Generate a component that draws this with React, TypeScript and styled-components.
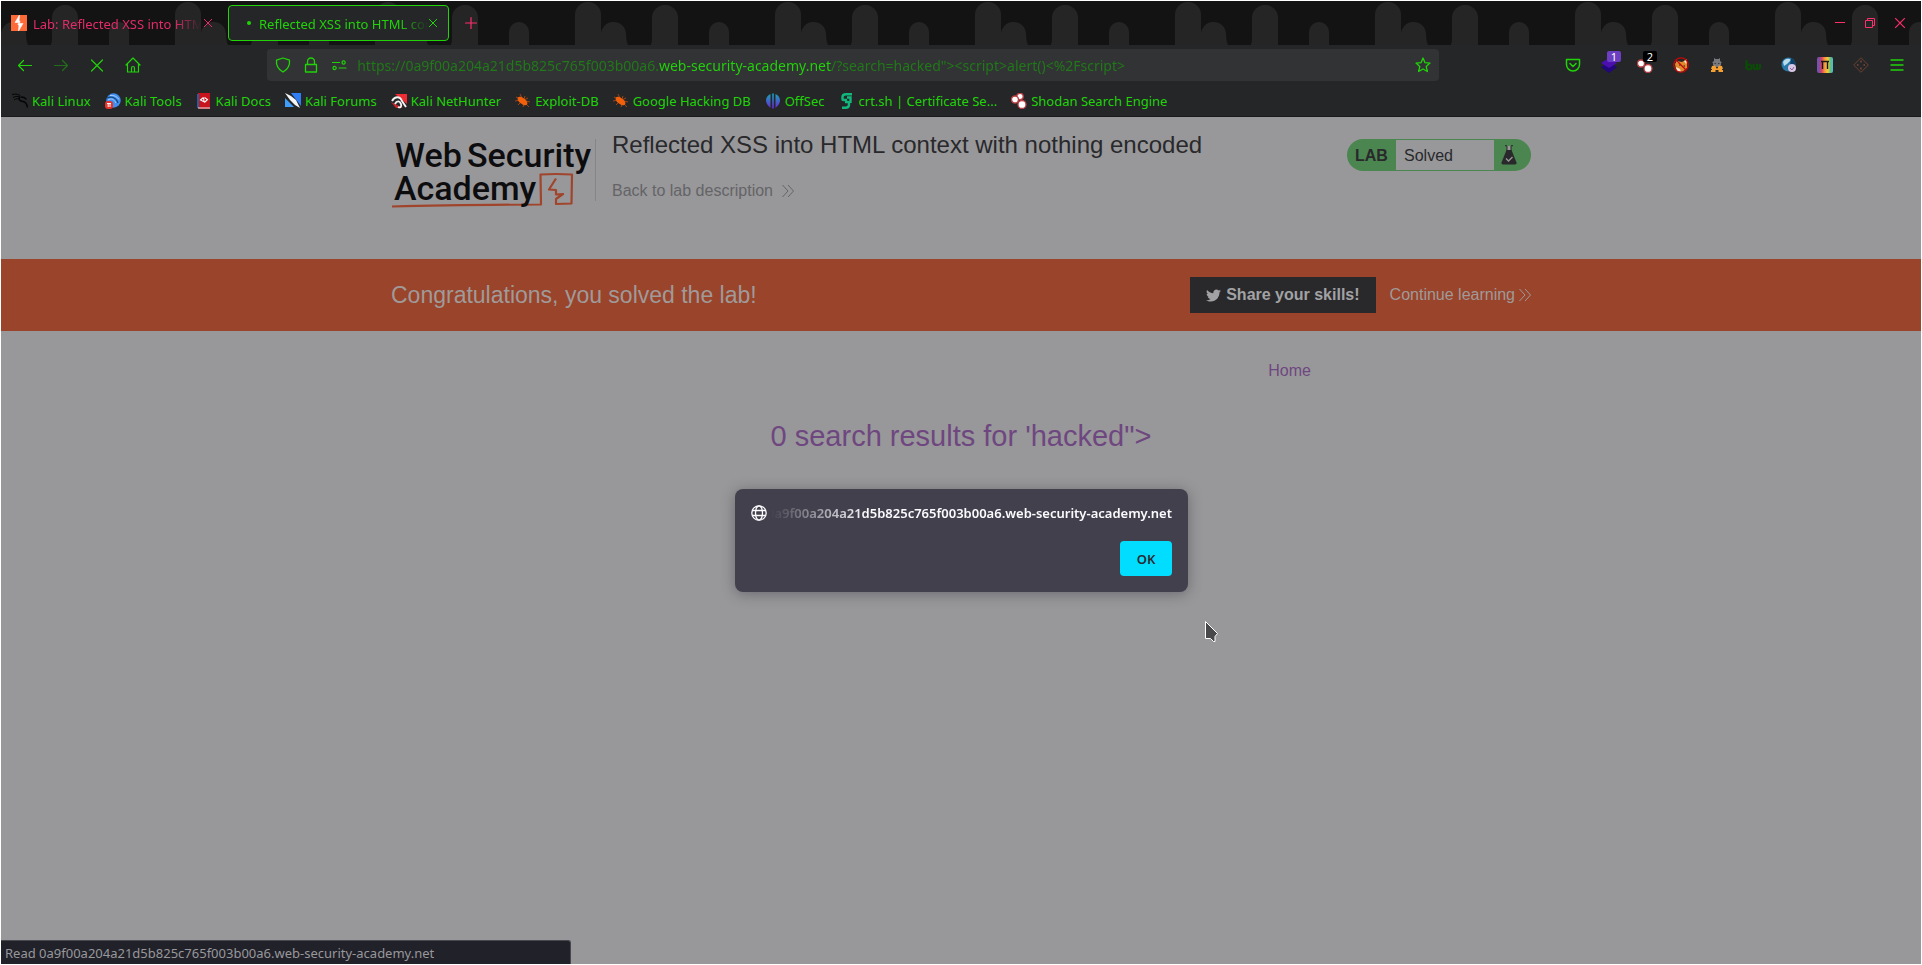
import React from "react";
import styled, { createGlobalStyle, css } from "styled-components";
import { FaTwitter } from "react-icons/fa";

const GREEN = "#20d408";
const GREEN_DIM = "#1f7a17";
const PINK = "#ff2e6c";
const UI_FONT = `"Noto Sans", "Open Sans", sans-serif`;
const PAGE_FONT = `"Liberation Sans", Arial, sans-serif`;

const Global = createGlobalStyle`
  * { box-sizing: border-box; }
  html, body { margin: 0; padding: 0; background: #ffffff; }
  button { font: inherit; color: inherit; background: none; border: 0; padding: 0; }
  a { color: inherit; text-decoration: none; }
  svg { display: block; flex: none; }
`;

/* ---------- window ---------- */

const Window = styled.div`
  position: relative;
  display: flex;
  flex-direction: column;
  min-height: 100vh;
  padding: 1px;
  font-family: ${UI_FONT};
  font-size: 13px;
`;

const TabStrip = styled.div`
  position: relative;
  display: flex;
  align-items: center;
  height: 44px;
  background: #131313;
`;

const StripArt = styled.svg`
  position: absolute;
  inset: 0;
  width: 100%;
  height: 100%;
`;

const Tab = styled.div<{ $active?: boolean }>`
  position: relative;
  display: flex;
  align-items: center;
  width: 221px;
  height: 36px;
  margin-right: 6px;
  padding: 0 9px 0 10px;
  gap: 6px;
  border-radius: 4px;
  color: ${(p) => (p.$active ? GREEN : "#e42b68")};
  ${(p) =>
    p.$active &&
    css`
      background: #252628;
      border: 1px solid ${GREEN};
      padding: 0 10px 0 15px;
      gap: 5px;
    `}
`;

const TabLabel = styled.span`
  flex: 1;
  min-width: 0;
  padding-top: 2px;
  overflow: hidden;
  white-space: nowrap;
  line-height: 20px;
  mask-image: linear-gradient(to left, transparent, #000 28px);
`;

const Spinner = styled.span`
  display: flex;
  justify-content: center;
  align-items: center;
  width: 10px;
  height: 16px;
  &::before {
    content: "";
    width: 4px;
    height: 4px;
    border-radius: 50%;
    background: ${GREEN};
  }
`;

const CloseTab = styled.button`
  display: flex;
  margin-left: -5px;
`;

const NewTab = styled.button`
  position: relative;
  display: flex;
  margin-left: 8px;
  color: ${PINK};
`;

const WindowControls = styled.div`
  position: relative;
  display: flex;
  margin-left: auto;
  padding-right: 6px;
  color: ${PINK};
`;

const ControlButton = styled.button`
  display: flex;
  justify-content: center;
  align-items: center;
  width: 30px;
  height: 30px;
`;

const Toolbar = styled.div`
  display: flex;
  align-items: center;
  height: 40px;
  padding: 0 6px;
  background: #252628;
  color: ${GREEN};
`;

const Group = styled.div`
  display: flex;
`;

const Spring = styled.div`
  flex: 1 1 0;
`;

const ToolButton = styled.button<{ $dim?: boolean }>`
  position: relative;
  display: flex;
  justify-content: center;
  align-items: center;
  width: 36px;
  height: 32px;
  opacity: ${(p) => (p.$dim ? 0.4 : 1)};
`;

const Badge = styled.span<{ $bg: string }>`
  position: absolute;
  top: 2px;
  right: 6px;
  width: 14px;
  height: 11px;
  border-radius: 2px;
  background: ${(p) => p.$bg};
  color: #ffffff;
  font-size: 11px;
  line-height: 11px;
  text-align: center;
`;

const UrlBar = styled.div`
  display: flex;
  flex: 10 1 0;
  align-items: center;
  min-width: 0;
  height: 32px;
  padding: 0 8px 0 2px;
  border-radius: 4px;
  background: #323335;
`;

const UrlButton = styled.button`
  display: flex;
  justify-content: center;
  width: 28px;
  &:last-child { width: 16px; }
`;

const UrlInput = styled.input`
  flex: 1;
  min-width: 0;
  height: 32px;
  padding: 0;
  margin-left: 4px;
  border: 0;
  outline: 0;
  font-family: ${UI_FONT};
  font-size: 14px;
  color: ${GREEN_DIM};
  -webkit-text-fill-color: transparent;
  background: linear-gradient(to right, ${GREEN_DIM} 302px, ${GREEN} 302px, ${GREEN} 474px, ${GREEN_DIM} 474px);
  background-clip: text;
  -webkit-background-clip: text;
`;

const Bookmarks = styled.nav`
  display: flex;
  align-items: center;
  gap: 14px;
  height: 32px;
  padding: 0 11px;
  background: #252628;
  border-bottom: 1px solid #1b1b1c;
  color: ${GREEN};
`;

const Bookmark = styled.a`
  display: flex;
  align-items: center;
  gap: 4px;
  line-height: 20px;
  white-space: nowrap;
`;

/* ---------- page ---------- */

const Page = styled.main`
  flex: 1;
  background: #98989a;
  font-family: ${PAGE_FONT};
  font-size: 16px;
  line-height: 20px;
  color: #29292c;
`;

const Container = styled.div`
  display: flex;
  width: 100%;
  max-width: 1140px;
  margin: 0 auto;
`;

const LabHeader = styled.header`
  height: 142px;
  padding-top: 12px;
`;

const LogoLink = styled.a`
  margin-top: 7px;
`;

const TitleBlock = styled.div`
  margin: 10px 0 0 4px;
  padding-left: 16px;
  height: 62px;
  border-left: 1px solid #858587;
`;

const LabTitle = styled.h2`
  margin: -10px 0 20px;
  font-size: 24px;
  font-weight: 400;
  line-height: 32px;
`;

const BackLink = styled.a`
  display: flex;
  align-items: center;
  gap: 9px;
  color: #646467;
`;

const Status = styled.div`
  display: flex;
  align-items: center;
  width: 184px;
  height: 32px;
  margin: 10px 0 0 auto;
  padding: 1px 0;
  border-radius: 16px;
  background: #4b8650;
`;

const StatusTag = styled.span`
  width: 49px;
  padding: 2px 0 0 8px;
  font-weight: 700;
`;

const StatusText = styled.p`
  width: 98px;
  height: 30px;
  margin: 0;
  padding-left: 8px;
  background: #98989a;
  line-height: 32px;
`;

const Flask = styled.svg`
  margin-left: 6px;
`;

const Banner = styled.section`
  padding: 18px 0;
  background: #99442b;
  color: #a09a99;
  ${Container} { align-items: center; }
`;

const BannerTitle = styled.h4`
  margin: 0 auto 0 0;
  font-size: 23px;
  font-weight: 400;
  line-height: 36px;
`;

const ShareButton = styled.button`
  display: flex;
  align-items: center;
  gap: 5px;
  height: 36px;
  padding: 0 16px;
  background: #29292c;
  color: #a2a2a4;
  font-weight: 700;
`;

const ContinueLink = styled.a`
  display: flex;
  align-items: center;
  gap: 4px;
  margin-left: 14px;
`;

const Results = styled.div`
  max-width: 700px;
  margin: 0 auto;
  padding-top: 30px;
  color: #6f4780;
`;

const HomeNav = styled.nav`
  display: flex;
  justify-content: flex-end;
`;

const ResultsTitle = styled.h1`
  margin: 37px 0 0;
  font-size: 29px;
  font-weight: 400;
  line-height: 36px;
  text-align: center;
`;

/* ---------- overlays ---------- */

const Alert = styled.div`
  position: absolute;
  top: 489px;
  left: 50%;
  width: 453px;
  transform: translateX(-226px);
  padding: 16px;
  border-radius: 8px;
  background: #42404d;
  color: #fbfbfe;
  box-shadow: 0 2px 14px rgba(40, 40, 50, 0.4);
`;

const AlertOrigin = styled.div`
  display: flex;
  align-items: center;
  gap: 4px;
  height: 16px;
`;

const OriginText = styled.span`
  display: flex;
  flex: 1;
  justify-content: flex-end;
  min-width: 0;
  overflow: hidden;
  font-weight: 600;
  line-height: 18px;
  white-space: nowrap;
  mask-image: linear-gradient(to right, transparent, #000 96px);
`;

const AlertActions = styled.div`
  display: flex;
  justify-content: flex-end;
  margin-top: 20px;
`;

const OkButton = styled.button`
  width: 52px;
  height: 35px;
  border-radius: 4px;
  background: #00ddff;
  color: #2b2a33;
  font-weight: 600;
`;

const Pointer = styled.svg`
  position: absolute;
  top: 620px;
  left: calc(50% + 243px);
`;

const LoadStatus = styled.div`
  position: absolute;
  left: 1px;
  bottom: 1px;
  min-width: 570px;
  height: 24px;
  padding-left: 4px;
  border-top: 1px solid #48484e;
  border-right: 1px solid #48484e;
  border-top-right-radius: 3px;
  background: #21212a;
  color: #98989a;
  line-height: 25px;
`;

/* ---------- icons ---------- */

const Line = ({ d, size = 16, width = 1.3 }: { d: string; size?: number; width?: number }) => (
  <svg width={size} height={size} viewBox="0 0 16 16" fill="none" stroke="currentColor" strokeWidth={width} strokeLinecap="round" strokeLinejoin="round" aria-hidden="true">
    <path d={d} />
  </svg>
);

const Chevrons = () => (
  <svg width="12" height="14" viewBox="0 0 12 14" fill="none" stroke="currentColor" strokeWidth="1" aria-hidden="true">
    <path d="M.5 1 6 7 .5 13M6 1l5.500 6L6 13" />
  </svg>
);

const Bug = () => (
  <svg width="16" height="16" viewBox="0 0 16 16" aria-hidden="true">
    <path d="M1 4l4 2M0 8l5-1M3 12l3-3M5 1l2 4M10 3l-1 3M15 9l-4-1M14 14l-3-3M8 14l1-3M13 5l-4 2" stroke="#9b4516" strokeWidth="1" />
    <ellipse cx="7.500" cy="8" rx="5.800" ry="3" transform="rotate(38 7.500 8)" fill="#f2600c" />
  </svg>
);

const Dots = ({ three }: { three?: boolean }) => (
  <svg width="16" height="16" viewBox="0 0 16 16" aria-hidden="true">
    <g fill="#ffffff" stroke="#b84044" strokeWidth="1.300">
      {three && <ellipse cx="9" cy="3.500" rx="3.200" ry="3.200" />}
      <circle cx="4" cy="6.500" r="3.500" />
      <circle cx="11" cy="11.500" r="4" />
    </g>
  </svg>
);

const icons: Record<string, React.ReactNode> = {
  linux: (
    <svg width="16" height="16" viewBox="0 0 16 16" fill="none" stroke="#050505" aria-hidden="true">
      <path d="M0 1.500c4-1 7 0 8.500 1.500M1 4.500c3-1.500 5-1.500 7 0M2 7c2-1.500 4-1.500 5-1" strokeWidth="1" />
      <path d="M8 3.500c-2 3 0 4.500 3 5 3 .5 4 3 4.500 6M9 4l3 .5 2.500 2" strokeWidth="1.500" />
    </svg>
  ),
  tools: (
    <svg width="16" height="16" viewBox="0 0 16 16" aria-hidden="true">
      <circle cx="8.500" cy="7.500" r="7.200" fill="#3f8ef0" />
      <path d="M2 5c4-2 9-1 11 5" stroke="#174878" strokeWidth="1.300" fill="none" />
      <path d="M3 7c3-2 6-1 8 3M5 2.500c4-.5 7 1 9 4" stroke="#a9d0ff" strokeWidth="1" fill="none" />
      <rect x="0" y="8" width="8" height="8" rx="3" fill="#e5332c" />
      <path d="M2 10.500h4M3.200 10.500V14M5 10.500V14" stroke="#fff" />
    </svg>
  ),
  docs: (
    <svg width="16" height="16" viewBox="0 0 16 16" aria-hidden="true">
      <path d="M2 0h12v16H3z" fill="#c8141c" />
      <path d="M1 1h2v14H1z" fill="#2b5c9e" />
      <path d="M2 15h12" stroke="#e8e8e8" />
      <path d="M7.500 4.500 4.500 7l3 1.500M7 5.500c1.500-2 0 4.500 2 3.500l2.500-2.500-3-2" stroke="#fff" strokeWidth="1.100" fill="none" />
    </svg>
  ),
  forums: (
    <svg width="16" height="16" viewBox="0 0 16 16" aria-hidden="true">
      <path d="M6 0h10v13z" fill="#2f7ef6" />
      <path d="M0 5l9 9H0z" fill="#3f9cf8" />
      <path d="M0 0l6 3 5 4 4 8-5-3-5-5z" fill="#f4f6f8" />
    </svg>
  ),
  hunter: (
    <svg width="16" height="16" viewBox="0 0 16 16" aria-hidden="true">
      <path d="M4 1h12v10z" fill="#ef2b33" />
      <path d="M0 9l5 6h7z" fill="#c9242c" />
      <path d="M1 8c3-5 8-5 10 0l4 6M4 11c2-4 5-3 6 0s-1 4-3 3" stroke="#f2f2f2" strokeWidth="1.900" fill="none" />
    </svg>
  ),
  bug: <Bug />,
  offsec: (
    <svg width="16" height="16" viewBox="0 0 16 16" aria-hidden="true">
      <defs>
        <linearGradient id="offsec" x1="0" y1="0" x2="0" y2="1">
          <stop offset="0" stopColor="#16a6b8" />
          <stop offset="1" stopColor="#6a27d8" />
        </linearGradient>
      </defs>
      <path d="M5.500 1C-.5 4-.5 10 5.500 15zM7.200.5h1.600v15H7.200zM10.500 1c6 3 6 9 0 14z" fill="url(#offsec)" />
    </svg>
  ),
  crt: (
    <svg width="16" height="16" viewBox="0 0 16 16" fill="none" stroke="#10b87c" strokeWidth="2.400" aria-hidden="true">
      <path d="M13 1.200H7Q3.500 1.200 3.500 4v2q0 1 1.500 1h3M3 14.800h3.500q3.500 0 3.500-3V10q0-1-1.500-1H6M8 4.500h3.500V10" />
    </svg>
  ),
  shodan: <Dots three />,
};

const bookmarks: [string, string][] = [
  ["linux", "Kali Linux"],
  ["tools", "Kali Tools"],
  ["docs", "Kali Docs"],
  ["forums", "Kali Forums"],
  ["hunter", "Kali NetHunter"],
  ["bug", "Exploit-DB"],
  ["bug", "Google Hacking DB"],
  ["offsec", "OffSec"],
  ["crt", "crt.sh | Certificate Se..."],
  ["shodan", "Shodan Search Engine"],
];

const extensions: { name: string; icon: React.ReactNode; badge?: string; badgeBg?: string }[] = [
  { name: "Pocket", icon: <Line d="M1.500 2.500h13v5a6.500 6.500 0 0 1-13 0zM5 6.500l3 3 3-3" width={1.5} /> },
  {
    name: "Layers",
    badge: "1",
    badgeBg: "#6c3fc0",
    icon: (
      <svg width="16" height="16" viewBox="0 0 16 16">
        <path d="M0 10l8-4 8 4-8 6z" fill="#21067c" />
        <path d="M0 6l8-5 8 5-8 5z" fill="#4a0fae" />
      </svg>
    ),
  },
  { name: "Shodan", icon: <Dots />, badge: "2", badgeBg: "#000000" },
  {
    name: "Fox",
    icon: (
      <svg width="16" height="16" viewBox="0 0 16 16">
        <path d="M2 7l2-3 5 1 5-3v9l-5 4-6-3z" fill="#e08a2c" />
        <path d="M3 10l4 2 1 3-4-1zM11 4l3-1-1 4zM3 5l2-1 1 2z" fill="#f5e8d8" />
        <path d="M6 8h1.500M10.500 9H12" stroke="#222" />
        <circle cx="8" cy="8" r="7.200" fill="none" stroke="#c40808" strokeWidth="1.300" />
        <path d="M3 3l10 10" stroke="#c40808" strokeWidth="1.200" />
      </svg>
    ),
  },
  {
    name: "Agent",
    icon: (
      <svg width="16" height="16" viewBox="0 0 16 16">
        <path d="M5 1l1.500 1h3L11 1v3l1.500 1v1H12v2l-2 2H6L4 8V6h-.5V5L5 4z" fill="#77797c" />
        <path d="M5.500 6.500h1.500M9 6.500h1.500" stroke="#3a3b3d" />
        <path d="M3 9l3-.5L8 12l2-3.500 3 .5 1 3h-1v1h1v2H9.500v-2h-3v2H2v-2h1v-1H2z" fill="#f5a030" />
      </svg>
    ),
  },
  {
    name: "Builder",
    icon: (
      <svg width="16" height="16" viewBox="0 0 16 16" fill="none" stroke="#0c4a08" strokeWidth="2.200">
        <path d="M1.500 3v9" />
        <circle cx="4" cy="10" r="2.500" />
        <path d="M8.500 7v3q0 2 1.700 2T12 10V7v3q0 2 1.500 2t1.500-2V7" />
      </svg>
    ),
  },
  {
    name: "Globe",
    icon: (
      <svg width="16" height="16" viewBox="0 0 16 16">
        <circle cx="7.500" cy="7.500" r="7" fill="#2878a8" />
        <path d="M2 5c2-4 6-4 8-2L6 7 3 9z" fill="#b8dcec" />
        <path d="M10 1c4 2 5 5 4 9L9 8z" fill="#0f3f66" />
        <circle cx="11" cy="11" r="4" fill="#d9c8e4" />
        <path d="M9 11l2 2 2-3" stroke="#8d5ea8" fill="none" />
      </svg>
    ),
  },
  {
    name: "Rainbow",
    icon: (
      <svg width="16" height="16" viewBox="0 0 16 16">
        <defs>
          <linearGradient id="rainbow">
            <stop offset="0.150" stopColor="#7d4fa8" />
            <stop offset="0.300" stopColor="#e2405c" />
            <stop offset="0.500" stopColor="#f2a03c" />
            <stop offset="0.680" stopColor="#f4cb38" />
            <stop offset="0.850" stopColor="#58c088" />
            <stop offset="1" stopColor="#58b8d8" />
          </linearGradient>
        </defs>
        <rect width="16" height="16" rx="2" fill="url(#rainbow)" />
        <path d="M4 4.500h8M5.500 4v8M10.500 4v8" stroke="#181818" strokeWidth="1.400" />
      </svg>
    ),
  },
  {
    name: "Dice",
    icon: (
      <svg width="16" height="16" viewBox="0 0 16 16" fill="none" stroke="#6b4030">
        <path d="M8 .7 15.300 8 8 15.300.7 8z" />
        <path d="M8 3.500v2M8 10.500v2M4 8h1.500M10.500 8H12" strokeWidth="1.800" />
      </svg>
    ),
  },
  { name: "Menu", icon: <Line d="M2 3h12M2 8h12M2 13h12" width={1.4} /> },
];

const Favicon = () => (
  <svg width="16" height="16" viewBox="0 0 16 16" aria-hidden="true">
    <rect width="16" height="16" fill="#ff6a39" />
    <path d="M8.500 0 4 7.500h3.500L7 10h1l-.5 6L12 8.500H8.500L9 6H8z" fill="#ffffff" stroke="#ffffff" strokeWidth=".6" />
  </svg>
);

const CloseMark = ({ size = 10 }: { size?: number }) => (
  <svg width={size} height={size} viewBox="0 0 10 10" fill="none" stroke="currentColor" strokeWidth="1" aria-hidden="true">
    <path d="M1 1l8 8M9 1 1 9" />
  </svg>
);

const Logo = () => (
  <svg width="200" height="74" viewBox="0 0 200 74" aria-label="Web Security Academy">
    <path d="M1 70.500Q60 69 150 68.500L149.500 38.500Q165 37.500 181 38.500L180.500 67.500 165 68V63L172 58 165 58.500V54L158 53.500 165 42.500" fill="none" stroke="#a0452b" strokeWidth="2.200" strokeLinejoin="round" />
    <g fontFamily="Roboto, sans-serif" fontSize="34" fontWeight="500" fill="#0d0d0f">
      <text x="4" y="31">Web</text>
      <text x="76" y="31">Security</text>
      <text x="3" y="64">Academy</text>
    </g>
  </svg>
);

export default function App() {
  return (
    <Window>
      <Global />
      <TabStrip>
        <StripArt aria-hidden="true">
          <defs>
            <pattern id="drips" width="200" height="44" patternUnits="userSpaceOnUse">
              <g fill="#252525">
                <path d="M0 44V34a12.500 12.500 0 0 1 25-1q0 7 2 11z" />
                <path d="M50 44q1-3 1-6V17a13 13 0 0 1 26 0v27z" />
                <path d="M108 44V31a10 10 0 0 1 20 0v13z" />
                <path d="M174 44V14a13 13 0 0 1 26 0v30z" />
              </g>
            </pattern>
          </defs>
          <rect width="100%" height="44" fill="url(#drips)" />
        </StripArt>
        <Tab>
          <Favicon />
          <TabLabel>Lab: Reflected XSS into HTML</TabLabel>
          <CloseTab aria-label="Close tab"><CloseMark /></CloseTab>
        </Tab>
        <Tab $active>
          <Spinner />
          <TabLabel>Reflected XSS into HTML context</TabLabel>
          <CloseTab aria-label="Close tab"><CloseMark /></CloseTab>
        </Tab>
        <NewTab aria-label="New tab"><Line d="M8 2.500v11M2.500 8h11" width={1.2} /></NewTab>
        <WindowControls>
          <ControlButton aria-label="Minimize">
            <svg width="10" height="10" viewBox="0 0 10 10" stroke="currentColor"><path d="M0 4.500h10" /></svg>
          </ControlButton>
          <ControlButton aria-label="Restore">
            <svg width="10" height="10" viewBox="0 0 10 10" fill="none" stroke="currentColor"><path d="M.5 2.500h7v7h-7zM2.500 2.500v-2h7v7h-2" /></svg>
          </ControlButton>
          <ControlButton aria-label="Close"><CloseMark size={12} /></ControlButton>
        </WindowControls>
      </TabStrip>

      <Toolbar>
        <Group>
          <ToolButton aria-label="Back"><Line d="M14.500 8.500H1.500M6.500 3.500l-5 5 5 5" width={1.2} /></ToolButton>
          <ToolButton aria-label="Forward" $dim><Line d="M1.500 8.500h13M9.500 3.500l5 5-5 5" width={1.2} /></ToolButton>
          <ToolButton aria-label="Stop"><Line d="M2.500 3l11 11M13.500 3l-11 11" width={1.2} /></ToolButton>
          <ToolButton aria-label="Home"><Line d="M1 8l7-7 7 7M2.500 7v8h11V7M6.500 15v-4a1.500 1.500 0 0 1 3 0v4" width={1.2} /></ToolButton>
        </Group>
        <Spring />
        <UrlBar>
          <UrlButton aria-label="Tracking protection"><Line d="M8 1l6.500 2.200c.5 5-1.500 9-6.500 11.800-5-2.800-7-6.800-6.500-11.800z" width={1.3} /></UrlButton>
          <UrlButton aria-label="Connection security"><Line d="M2.500 7.500h11v7.500h-11zM4.500 7.500V4.500a3.500 3.500 0 0 1 7 0v3" width={1.3} /></UrlButton>
          <UrlButton aria-label="Permissions"><Line d="M1.500 5.500h7M8 11h7M11 5.500a1.600 1.600 0 1 0 3.200 0 1.600 1.600 0 0 0-3.200 0M2 11a1.600 1.600 0 1 0 3.200 0A1.600 1.600 0 0 0 2 11" width={1.2} /></UrlButton>
          <UrlInput
            aria-label="Address"
            spellCheck={false}
            defaultValue={'https://0a9f00a204a21d5b825c765f003b00a6.web-security-academy.net/?search=hacked"><script>alert()<%2Fscript>'}
          />
          <UrlButton aria-label="Bookmark this page"><Line d="M8 1l2 4.700 5 .4-3.800 3.400 1.200 5L8 12l-4.400 2.500 1.200-5L1 6.100l5-.4z" width={1.3} /></UrlButton>
        </UrlBar>
        <Spring />
        <Group>
          {extensions.map((e) => (
            <ToolButton key={e.name} aria-label={e.name}>
              {e.icon}
              {e.badge && <Badge $bg={e.badgeBg!}>{e.badge}</Badge>}
            </ToolButton>
          ))}
        </Group>
      </Toolbar>

      <Bookmarks aria-label="Bookmarks">
        {bookmarks.map(([icon, label]) => (
          <Bookmark href="#" key={label}>
            {icons[icon]}
            {label}
          </Bookmark>
        ))}
      </Bookmarks>

      <Page>
        <LabHeader>
          <Container>
            <LogoLink href="#"><Logo /></LogoLink>
            <TitleBlock>
              <LabTitle>Reflected XSS into HTML context with nothing encoded</LabTitle>
              <BackLink href="#">Back to lab description <Chevrons /></BackLink>
            </TitleBlock>
            <Status>
              <StatusTag>LAB</StatusTag>
              <StatusText>Solved</StatusText>
              <Flask width="18" height="20" viewBox="0 0 18 20" aria-hidden="true">
                <path d="M7 1v6h4V1" fill="#98989a" />
                <path d="M5 .7h2M11 .7h2M7 1v5M11 1v5" stroke="#29292c" />
                <path d="M6.500 5h5l5 12.500q.5 2-1.500 2H3q-2 0-1.500-2z" fill="#29292c" />
                <path d="M6 13.500l2.500 2.500 4-4" stroke="#98989a" strokeWidth="1.300" fill="none" />
              </Flask>
            </Status>
          </Container>
        </LabHeader>

        <Banner>
          <Container>
            <BannerTitle>Congratulations, you solved the lab!</BannerTitle>
            <ShareButton><FaTwitter size={15} />Share your skills!</ShareButton>
            <ContinueLink href="#">Continue learning <Chevrons /></ContinueLink>
          </Container>
        </Banner>

        <Results>
          <HomeNav><a href="#">Home</a></HomeNav>
          <ResultsTitle>0 search results for 'hacked"&gt;</ResultsTitle>
        </Results>
      </Page>

      <Alert role="alertdialog" aria-label="Page message">
        <AlertOrigin>
          <svg width="16" height="16" viewBox="0 0 16 16" fill="none" stroke="currentColor" strokeWidth="1.300" aria-hidden="true">
            <circle cx="8" cy="8" r="7.200" />
            <ellipse cx="8" cy="8" rx="3.500" ry="7.200" />
            <path d="M1.500 5.500h13M1.500 10.500h13" />
          </svg>
          <OriginText>0a9f00a204a21d5b825c765f003b00a6.web-security-academy.net</OriginText>
        </AlertOrigin>
        <AlertActions>
          <OkButton>OK</OkButton>
        </AlertActions>
      </Alert>

      <Pointer width="16" height="24" viewBox="0 0 16 24" aria-hidden="true">
        <path d="M1.500 1.500v17h5l3 3h1.500v-5l2.500-3z" fill="#48484a" stroke="#ffffff" strokeWidth="1" />
      </Pointer>

      <LoadStatus>Read 0a9f00a204a21d5b825c765f003b00a6.web-security-academy.net</LoadStatus>
    </Window>
  );
}
